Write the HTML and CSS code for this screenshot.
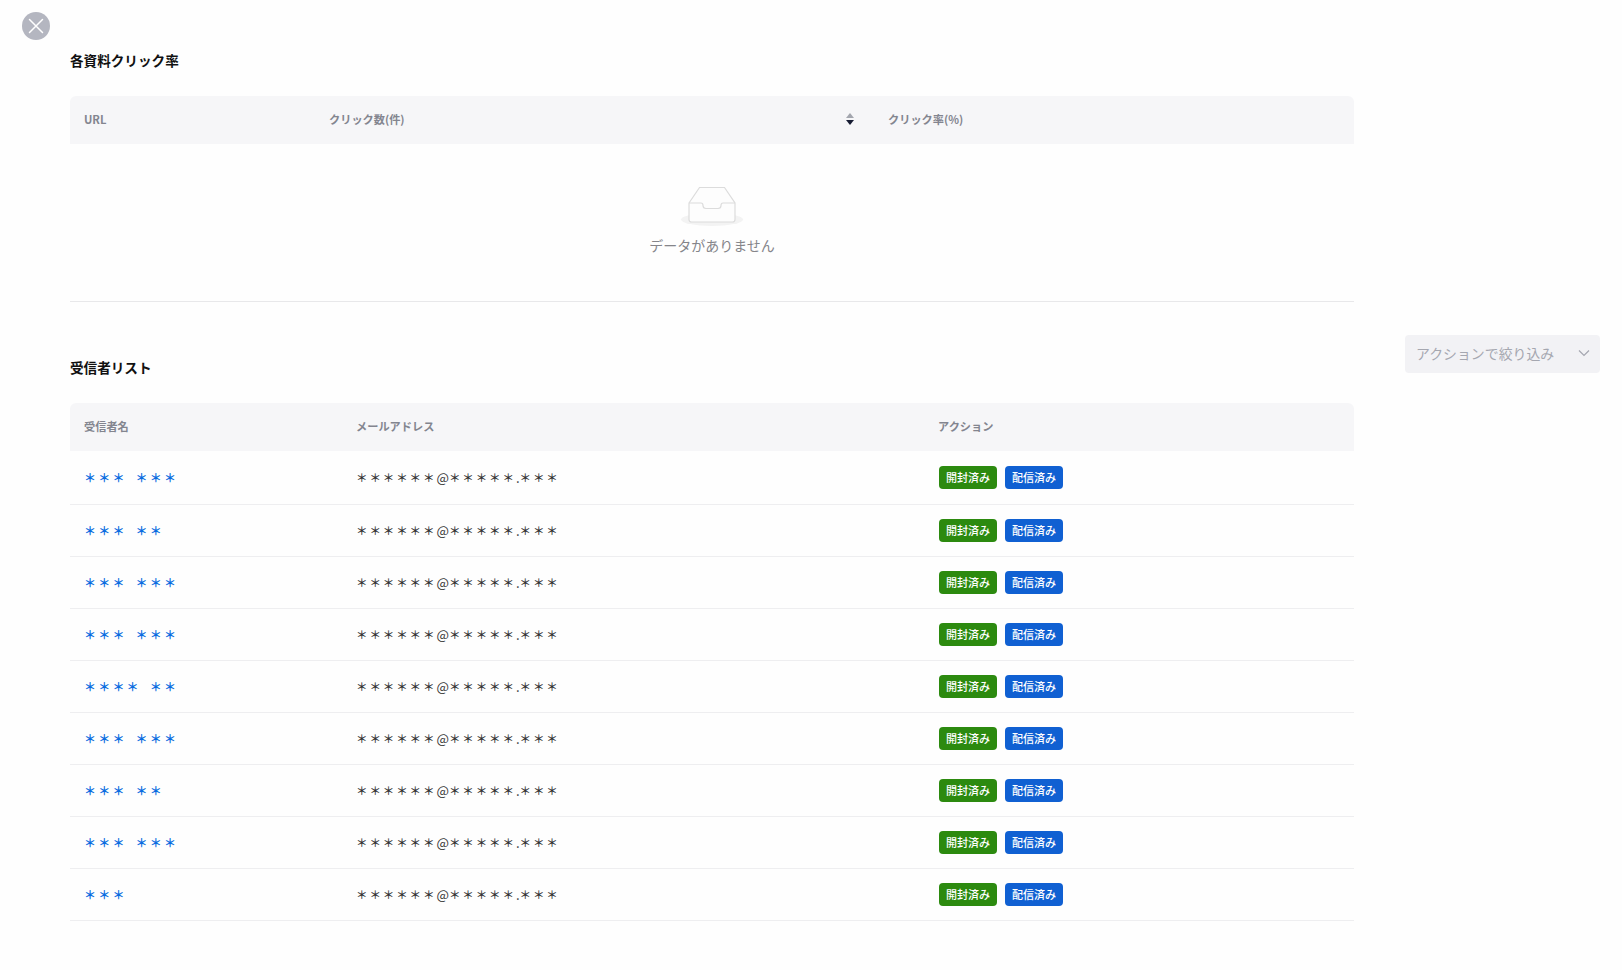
FILE: index.html
```html
<!DOCTYPE html>
<html lang="ja">
<head>
  <meta charset="UTF-8">
  <title>受信者リスト</title>
  <link rel="stylesheet" href="styles.css">
</head>
<body>
  <button class="close-btn" type="button" aria-label="閉じる">
    <svg width="16" height="16" viewBox="0 0 16 16"><path d="M1.500 1.500 14.500 14.500M14.500 1.500 1.500 14.500" stroke="#fff" stroke-width="1.500" stroke-linecap="round"/></svg>
  </button>

  <section class="section clicks">
    <h2>各資料クリック率</h2>
    <table class="table click-table">
      <thead>
        <tr>
          <th class="col-url">URL</th>
          <th class="col-count">
            <div class="sortable">クリック数(件)
              <svg class="sort-icon" width="10" height="14" viewBox="0 0 10 14"><path d="M5 1 9 6H1Z" fill="#a3a6ae"/><path d="M5 13 1 8H9Z" fill="#171c33"/></svg>
            </div>
          </th>
          <th>クリック率(%)</th>
        </tr>
      </thead>
    </table>
    <div class="empty">
      <svg width="64" height="42" viewBox="0 0 64 42">
        <ellipse cx="32" cy="33.500" rx="31" ry="6.500" fill="#f3f3f3"/>
        <path d="M9 17 19.500 1.500H44.500L55 17V33.500Q55 36 52.500 36H11.500Q9 36 9 33.500Z" fill="#fdfdfd" stroke="#dcdcdc" stroke-width="1.200"/>
        <path d="M9 17H21Q23 17 23 19.500 23 22.500 26 22.500H38Q41 22.500 41 19.500 41 17 43 17H55" fill="none" stroke="#dcdcdc" stroke-width="1.200"/>
      </svg>
      <p>データがありません</p>
    </div>
  </section>

  <div class="recipients-row">
    <section class="section recipients">
      <h2>受信者リスト</h2>
      <table class="table recipient-table">
        <thead>
          <tr>
            <th class="col-name">受信者名</th>
            <th class="col-mail">メールアドレス</th>
            <th>アクション</th>
          </tr>
        </thead>
        <tbody>
          <tr><td class="name">＊＊＊ ＊＊＊</td><td class="mail"><span class="stars">＊＊＊＊＊＊</span>@<span class="stars">＊＊＊＊＊</span>.<span class="stars">＊＊＊</span></td><td><span class="tag green">開封済み</span><span class="tag blue">配信済み</span></td></tr>
          <tr><td class="name">＊＊＊ ＊＊</td><td class="mail"><span class="stars">＊＊＊＊＊＊</span>@<span class="stars">＊＊＊＊＊</span>.<span class="stars">＊＊＊</span></td><td><span class="tag green">開封済み</span><span class="tag blue">配信済み</span></td></tr>
          <tr><td class="name">＊＊＊ ＊＊＊</td><td class="mail"><span class="stars">＊＊＊＊＊＊</span>@<span class="stars">＊＊＊＊＊</span>.<span class="stars">＊＊＊</span></td><td><span class="tag green">開封済み</span><span class="tag blue">配信済み</span></td></tr>
          <tr><td class="name">＊＊＊ ＊＊＊</td><td class="mail"><span class="stars">＊＊＊＊＊＊</span>@<span class="stars">＊＊＊＊＊</span>.<span class="stars">＊＊＊</span></td><td><span class="tag green">開封済み</span><span class="tag blue">配信済み</span></td></tr>
          <tr><td class="name">＊＊＊＊ ＊＊</td><td class="mail"><span class="stars">＊＊＊＊＊＊</span>@<span class="stars">＊＊＊＊＊</span>.<span class="stars">＊＊＊</span></td><td><span class="tag green">開封済み</span><span class="tag blue">配信済み</span></td></tr>
          <tr><td class="name">＊＊＊ ＊＊＊</td><td class="mail"><span class="stars">＊＊＊＊＊＊</span>@<span class="stars">＊＊＊＊＊</span>.<span class="stars">＊＊＊</span></td><td><span class="tag green">開封済み</span><span class="tag blue">配信済み</span></td></tr>
          <tr><td class="name">＊＊＊ ＊＊</td><td class="mail"><span class="stars">＊＊＊＊＊＊</span>@<span class="stars">＊＊＊＊＊</span>.<span class="stars">＊＊＊</span></td><td><span class="tag green">開封済み</span><span class="tag blue">配信済み</span></td></tr>
          <tr><td class="name">＊＊＊ ＊＊＊</td><td class="mail"><span class="stars">＊＊＊＊＊＊</span>@<span class="stars">＊＊＊＊＊</span>.<span class="stars">＊＊＊</span></td><td><span class="tag green">開封済み</span><span class="tag blue">配信済み</span></td></tr>
          <tr><td class="name">＊＊＊</td><td class="mail"><span class="stars">＊＊＊＊＊＊</span>@<span class="stars">＊＊＊＊＊</span>.<span class="stars">＊＊＊</span></td><td><span class="tag green">開封済み</span><span class="tag blue">配信済み</span></td></tr>
        </tbody>
      </table>
    </section>
    <div class="filter">
      <span>アクションで絞り込み</span>
      <svg width="12" height="8" viewBox="0 0 12 8"><path d="M1 1.500 6 6.500 11 1.500" fill="none" stroke="#a5a7b0" stroke-width="1.200"/></svg>
    </div>
  </div>
</body>
</html>
```

FILE: styles.css
```css
body {
  background: #fefefe;
  color: #1c1c1c;
  font-family: "Noto Sans CJK JP", "Noto Sans", sans-serif;
  margin: 0;
  padding: 50px 0 0 70px;
}
.close-btn {
  position: absolute;
  left: 22px;
  top: 12px;
  width: 28px;
  height: 28px;
  padding: 0;
  border: none;
  border-radius: 50%;
  background: #b4b6c0;
  display: flex;
  align-items: center;
  justify-content: center;
}
.section {
  width: 1284px;
}
h2 {
  font-size: 13.600px;
  font-weight: 700;
  line-height: 20px;
  margin: 0 0 26px 0;
  color: #111;
}
.table {
  width: 100%;
  border-collapse: collapse;
  table-layout: fixed;
}
.table th {
  background: #f6f6f8;
  color: #83858f;
  font-size: 11.200px;
  font-weight: 700;
  text-align: left;
  padding: 0 15px 2px 15px;
  height: 46px;
}
.table th:first-child {
  border-top-left-radius: 6px;
  padding-left: 14px;
}
.table th:last-child {
  border-top-right-radius: 6px;
}
.col-url {
  width: 215px;
}
.col-count {
  width: 529px;
}
.col-name {
  width: 242px;
}
.col-mail {
  width: 552px;
}
.sortable {
  display: flex;
  justify-content: space-between;
  align-items: center;
}
.sort-icon {
  margin-right: 3px;
}
.empty {
  height: 158px;
  border-bottom: 1px solid #e8e8ea;
  text-align: center;
  box-sizing: border-box;
  padding-top: 42px;
}
.empty svg {
  display: block;
  margin: 0 auto;
}
.empty p {
  margin: 7px 0 0 0;
  font-size: 14px;
  line-height: 20px;
  color: #85858a;
}
.recipients-row {
  display: flex;
  align-items: flex-start;
  gap: 51px;
}
.recipients {
  padding-top: 55px;
}
.recipient-table td {
  height: 51px;
  padding: 0 15px;
  border-bottom: 1px solid #eeeef0;
  font-size: 14px;
}
.recipient-table td:first-child {
  padding-left: 14px;
}
.recipient-table tbody tr:first-child td {
  height: 53px;
}
.recipient-table td.name {
  color: #0a6ce0;
  font-size: 12px;
  font-weight: 700;
  letter-spacing: 2.200px;
  word-spacing: 4px;
}
.recipient-table td.mail {
  color: #333;
  font-size: 13.200px;
}
.stars {
  font-size: 11.500px;
  letter-spacing: 1.900px;
  font-weight: 500;
  vertical-align: 1px;
}
.tag {
  display: inline-block;
  height: 23px;
  line-height: 22px;
  width: 58px;
  text-align: center;
  border-radius: 4px;
  color: #fff;
  font-size: 11px;
  font-weight: 500;
  margin-right: 8px;
  vertical-align: middle;
}
.green {
  background: #2c8a0f;
  margin-left: 1px;
}
.blue {
  background: #1060d2;
}
.filter {
  margin-top: 33px;
  width: 195px;
  height: 38px;
  box-sizing: border-box;
  background: #f2f2f5;
  border-radius: 4px;
  padding: 0 10px 2px 11px;
  display: flex;
  align-items: center;
  justify-content: space-between;
  color: #a5a7b0;
  font-size: 13.900px;
}
```
